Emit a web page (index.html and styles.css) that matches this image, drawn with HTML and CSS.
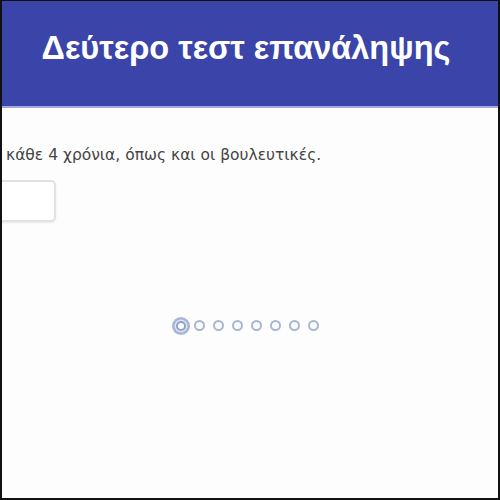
FILE: index.html
```html
<!DOCTYPE html>
<html lang="el">
<head>
<meta charset="UTF-8">
<meta name="viewport" content="width=device-width, initial-scale=1.0">
<title>Δεύτερο τεστ επανάληψης</title>
<link rel="stylesheet" href="styles.css">
</head>
<body>

<div class="frame">
  <header class="header">
    <h1>Δεύτερο τεστ επανάληψης</h1>
  </header>

  <div class="question">
    <p class="question-text">κάθε 4 χρόνια, όπως και οι βουλευτικές.</p>
    <div class="answer"></div>
  </div>

  <div class="pager">
    <span class="dot current"></span>
    <span class="dot"></span>
    <span class="dot"></span>
    <span class="dot"></span>
    <span class="dot"></span>
    <span class="dot"></span>
    <span class="dot"></span>
    <span class="dot"></span>
  </div>
</div>

</body>
</html>
```

FILE: styles.css
```css
html, body {
  margin: 0;
  padding: 0;
  background-color: #fff;
}

.frame {
  width: 500px;
  height: 500px;
  box-sizing: border-box;
  border: 2px solid #111;
  border-top-width: 1px;
  overflow: hidden;
  background-color: #fdfdfd;
}

.header {
  height: 105px;
  background-color: #3a44a9;
  border-bottom: 2px solid #a3a8e0;
  display: flex;
  align-items: center;
  justify-content: center;
  padding-right: 8px;
}

.header h1 {
  margin: 0 0 10px 0;
  font-family: "Liberation Sans", Arial, sans-serif;
  font-size: 32.5px;
  font-weight: bold;
  color: #fff;
}

.question {
  padding: 38px 0 0 0;
}

.question-text {
  margin: 0 0 0 4px;
  font-family: "DejaVu Sans", sans-serif;
  font-size: 15.5px;
  color: #444;
}

.answer {
  width: 66px;
  height: 38px;
  margin: 16px 0 0 -16px;
  border: 2px solid #e2e2e2;
  border-radius: 5px;
  box-shadow: 0 1px 2px rgba(0, 0, 0, 0.08);
  background-color: #fff;
}

.pager {
  display: flex;
  align-items: center;
  gap: 8px;
  margin: 98px 0 0 174px;
}

.dot {
  width: 7px;
  height: 7px;
  border: 2px solid #a8b6d6;
  border-radius: 50%;
}

.dot.current {
  width: 6px;
  height: 6px;
  border: 2px solid #8fa1c8;
  background-color: #fff;
  box-shadow: 0 0 0 1.5px #dde3f0, 0 0 0 4px #a6b5d6;
}
```
